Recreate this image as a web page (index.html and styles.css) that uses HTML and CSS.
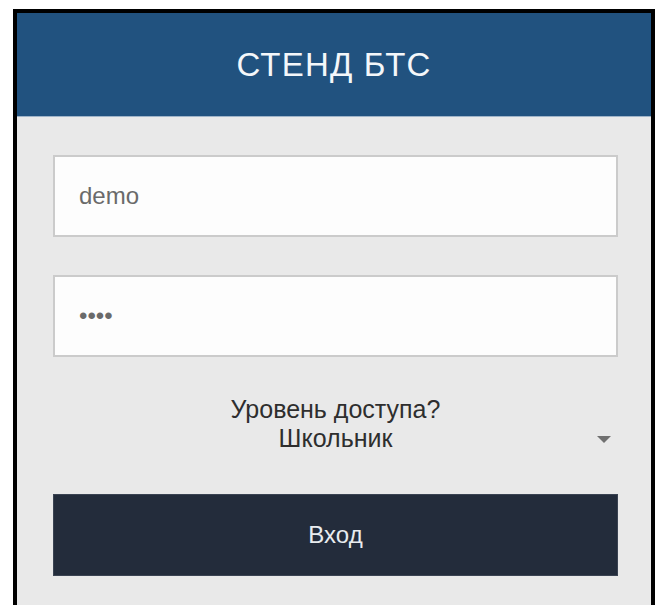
FILE: index.html
```html
<!DOCTYPE html>
<html lang="ru">
<head>
<meta charset="utf-8">
<title>СТЕНД БТС</title>
<link rel="stylesheet" href="styles.css">
</head>
<body>
  <div class="panel">
    <header class="panel-head">
      <h1 class="panel-title">СТЕНД БТС</h1>
    </header>
    <form class="login">
      <input class="field" type="text" value="demo">
      <input class="field field-pass" type="password" value="demo">
      <div class="level">
        <div class="level-label">Уровень доступа?</div>
        <div class="level-select">
          <span class="level-value">Школьник</span>
          <span class="level-caret"></span>
        </div>
      </div>
      <button class="submit" type="button">Вход</button>
    </form>
  </div>
</body>
</html>
```
FILE: styles.css
```css
html, body {
  margin: 0;
  padding: 0;
  background: #ffffff;
  font-family: "Liberation Sans", Arial, sans-serif;
}

.panel {
  margin: 9px 4px 0 13px;
  border: 4px solid #000;
  border-bottom: none;
  background: #e9e9e9;
  height: 700px;
}

.panel-head {
  background: #21527f;
  height: 103px;
  border-bottom: 1px solid #9fb4c9;
  display: flex;
  align-items: center;
  justify-content: center;
}

.panel-title {
  margin: 0;
  color: #f4f7fa;
  font-weight: 400;
  font-size: 33px;
  letter-spacing: 1.2px;
}

.login {
  display: flex;
  flex-direction: column;
  padding: 38px 33px 0 36px;
  gap: 38px;
}

.field {
  box-sizing: border-box;
  height: 82px;
  width: 100%;
  margin: 0;
  border: 2px solid #cbcbcb;
  background: #fdfdfd;
  padding: 0 24px;
  font-family: "Liberation Sans", Arial, sans-serif;
  font-size: 24px;
  color: #6a6a6a;
  outline: none;
}

.level {
  display: flex;
  flex-direction: column;
  align-items: center;
  color: #2e2e2e;
  font-size: 25px;
  line-height: 29px;
  margin-bottom: 3px;
}

.level-select {
  position: relative;
  align-self: stretch;
  text-align: center;
}

.level-caret {
  position: absolute;
  right: 7px;
  top: 12px;
  width: 0;
  height: 0;
  border-left: 7px solid transparent;
  border-right: 7px solid transparent;
  border-top: 7px solid #707070;
}

.submit {
  box-sizing: border-box;
  height: 82px;
  width: 100%;
  border: 1px solid #3a4352;
  background: #232c3b;
  color: #e9ecef;
  font-family: "Liberation Sans", Arial, sans-serif;
  font-size: 24px;
  cursor: pointer;
}
```
